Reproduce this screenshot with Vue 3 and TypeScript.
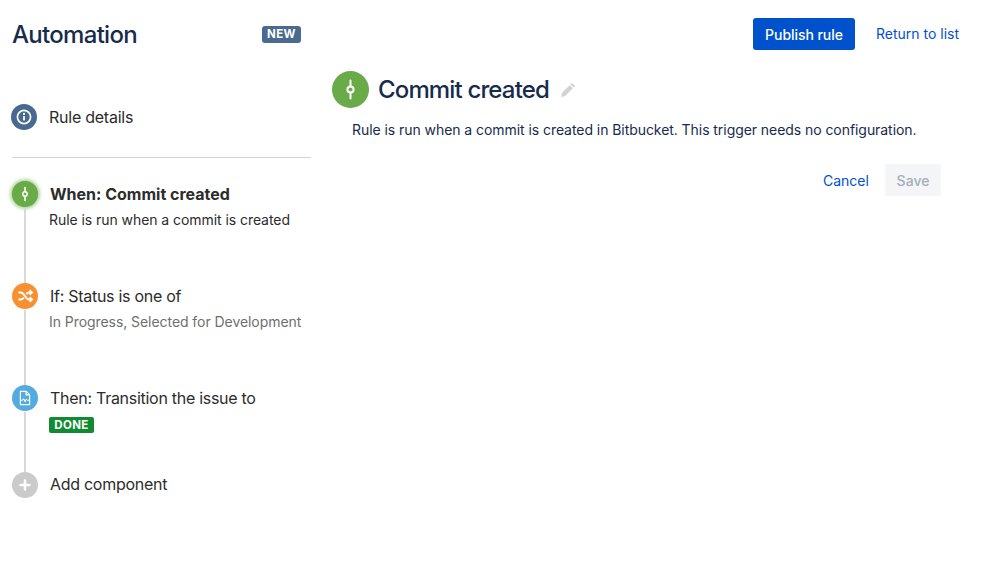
<script setup lang="ts">
interface Step {
  title: string
  sub?: string
  muted?: boolean
  active?: boolean
  lozenge?: string
  kind: 'commit' | 'shuffle' | 'file' | 'add'
}
const steps: Step[] = [
  { title: 'When: Commit created', sub: 'Rule is run when a commit is created', active: true, kind: 'commit' },
  { title: 'If: Status is one of', sub: 'In Progress, Selected for Development', muted: true, kind: 'shuffle' },
  { title: 'Then: Transition the issue to', lozenge: 'DONE', kind: 'file' },
  { title: 'Add component', kind: 'add' }
]
</script>

<template>
  <div class="page">
    <aside class="side">
      <div class="brand">
        <h1>Automation</h1>
        <span class="badge">NEW</span>
      </div>
      <div class="details">
        <span class="dot info">
          <svg width="26" height="26" viewBox="0 0 26 26" fill="none">
            <circle cx="13" cy="13" r="6.6" stroke="#fff" stroke-width="1.7" />
            <rect x="12.1" y="12" width="1.8" height="4.4" rx=".5" fill="#fff" />
            <circle cx="13" cy="9.9" r="1.05" fill="#fff" />
          </svg>
        </span>
        <span class="details-label">Rule details</span>
      </div>
      <hr class="rule" />
      <ol class="steps">
        <li v-for="s in steps" :key="s.kind" class="step" :class="s.kind">
          <div class="rail">
            <span class="dot" :class="['ic-' + s.kind, { glow: s.active }]">
              <svg v-if="s.kind === 'commit'" width="26" height="26" viewBox="0 0 26 26" fill="none">
                <path d="M13 6.5v4.2M13 15.3v4.2" stroke="#fff" stroke-width="1.6" stroke-linecap="round" />
                <circle cx="13" cy="13" r="2.2" stroke="#fff" stroke-width="1.5" />
              </svg>
              <svg v-else-if="s.kind === 'shuffle'" width="26" height="26" viewBox="0 0 26 26" fill="none" stroke="#fff" stroke-width="1.9">
                <path d="M6.5 9.5h2.6c3 0 4.6 7 7.8 7h1.6M6.5 16.5h2.6c1.2 0 2-.9 2.7-2M14.3 11.2c.7-1 1.5-1.7 2.6-1.7h1.6" />
                <path d="M17.6 7.2l2.4 2.3-2.4 2.3M17.6 14.2l2.4 2.3-2.4 2.3" />
              </svg>
              <svg v-else-if="s.kind === 'file'" width="26" height="26" viewBox="0 0 26 26" fill="none" stroke="#fff" stroke-width="1.2">
                <path d="M8.4 6.4h5.9l3.3 3.3v9.9H8.4z" stroke-linejoin="round" />
                <path d="M14.1 6.6v3.3h3.3" />
                <path d="M8.8 15.2h2l.9-1.6 1.3 3.2 1.2-2.6.7 1h2.3" stroke-width="1" />
              </svg>
              <svg v-else width="26" height="26" viewBox="0 0 26 26" fill="none">
                <path d="M13 8.6v8.8M8.6 13h8.8" stroke="#fff" stroke-width="2.6" stroke-linecap="round" />
              </svg>
            </span>
            <span v-if="s.kind !== 'add'" class="line"></span>
          </div>
          <div class="body">
            <div class="title" :class="{ strong: s.active }">{{ s.title }}</div>
            <div v-if="s.sub" class="sub" :class="{ muted: s.muted }">{{ s.sub }}</div>
            <span v-if="s.lozenge" class="lozenge">{{ s.lozenge }}</span>
          </div>
        </li>
      </ol>
    </aside>

    <main class="main">
      <div class="top">
        <button class="primary">Publish rule</button>
        <a class="link return">Return to list</a>
      </div>
      <div class="heading">
        <span class="dot big">
          <svg width="37" height="37" viewBox="0 0 37 37" fill="none">
            <path d="M18.5 9.5v6M18.5 21.5v6" stroke="#fff" stroke-width="2" stroke-linecap="round" />
            <circle cx="18.5" cy="18.5" r="3.1" stroke="#fff" stroke-width="2" />
          </svg>
        </span>
        <h2>Commit created</h2>
        <svg class="pencil" width="16" height="16" viewBox="0 0 16 16">
          <path d="M12 .9l3.1 3.1-1.5 1.5-3.1-3.1zM9.7 3.2l3.1 3.1-7.6 7.6-4.2 1.1 1.1-4.2z" fill="#d2d2d2" />
        </svg>
      </div>
      <p class="desc">Rule is run when a commit is created in Bitbucket. This trigger needs no configuration.</p>
      <div class="actions">
        <a class="link cancel">Cancel</a>
        <button class="save" disabled>Save</button>
      </div>
    </main>
  </div>
</template>

<style>
body {
  background: #fff;
}
</style>

<style scoped>
.page {
  width: 999px;
  height: 565px;
  display: flex;
  overflow: hidden;
  font-family: Inter, "Liberation Sans", sans-serif;
  color: #172b4d;
}
.side {
  width: 299px;
  margin-left: 12px;
  flex: none;
  display: flex;
  flex-direction: column;
}
.brand {
  display: flex;
  align-items: center;
  justify-content: space-between;
  height: 68px;
  padding-right: 10px;
}
h1 {
  margin: 0;
  font-size: 24px;
  font-weight: 500;
  letter-spacing: -0.7px;
  color: #172b4d;
}
.badge {
  width: 39px;
  height: 17px;
  border-radius: 3px;
  background: #4a6a8f;
  color: #fff;
  font-size: 11.5px;
  font-weight: 700;
  line-height: 17px;
  text-align: center;
  letter-spacing: 0.4px;
}
.details {
  display: flex;
  align-items: center;
  gap: 12px;
  height: 26px;
  margin-top: 36px;
  margin-left: -1px;
}
.details-label {
  font-size: 16px;
  letter-spacing: -0.25px;
  color: #2c2c2c;
}
.dot {
  display: block;
  flex: none;
  width: 26px;
  height: 26px;
  border-radius: 50%;
}
.dot svg {
  display: block;
}
.info {
  background: #49698e;
}
.rule {
  border: 0;
  height: 1px;
  background: #d4d4d4;
  margin: 27px 0 0;
  width: 299px;
}
.steps {
  list-style: none;
  margin: 23px 0 0;
  padding: 0;
}
.step {
  display: flex;
  height: 102px;
}
.step.file {
  height: 87px;
}
.step.add {
  height: 26px;
}
.rail {
  width: 26px;
  flex: none;
  display: flex;
  flex-direction: column;
  align-items: center;
}
.line {
  flex: 1;
  width: 2px;
  background: #d9d9d9;
  margin-top: 1px;
}
.ic-commit {
  background: #68ab48;
}
.glow {
  box-shadow: 0 0 4px 1px rgba(104, 171, 72, 0.75);
}
.ic-shuffle {
  background: #f7902f;
}
.ic-file {
  background: #54abdf;
}
.ic-add {
  background: #cbcbcb;
}
.body {
  margin-left: 12px;
}
.title {
  font-size: 16px;
  line-height: 26px;
  letter-spacing: -0.28px;
  color: #2c2c2c;
}
.title.strong {
  font-weight: 700;
  letter-spacing: 0;
}
.add .title {
  line-height: 24px;
}
.sub {
  font-size: 14px;
  line-height: 20px;
  margin-top: 3px;
  margin-left: -1px;
  letter-spacing: -0.06px;
  color: #2c2c2c;
}
.sub.muted {
  color: #6f6f6f;
}
.lozenge {
  display: block;
  width: 45px;
  height: 16px;
  margin-top: 6px;
  margin-left: -1px;
  border-radius: 2px;
  background: #118a31;
  color: #fff;
  font-size: 11.5px;
  font-weight: 700;
  line-height: 16px;
  text-align: center;
  letter-spacing: 0.4px;
}
.main {
  flex: 1;
  min-width: 0;
  padding-left: 21px;
  display: flex;
  flex-direction: column;
}
.top {
  display: flex;
  align-items: center;
  height: 32px;
  margin-top: 18px;
  margin-left: 421px;
}
.primary {
  width: 102px;
  height: 32px;
  border: 0;
  border-radius: 3px;
  background: #0052cc;
  color: #fff;
  font: 500 14px Inter, "Liberation Sans", sans-serif;
  letter-spacing: -0.05px;
  padding: 0;
}
.link {
  color: #0052cc;
  font-size: 14px;
  line-height: 20px;
}
.return {
  margin-left: 21px;
  margin-top: -1px;
}
.heading {
  display: flex;
  align-items: center;
  height: 37px;
  margin-top: 21px;
}
.big {
  width: 37px;
  height: 37px;
  background: #68ab48;
}
h2 {
  margin: -1px 0 0 9px;
  font-size: 24px;
  font-weight: 500;
  letter-spacing: -0.85px;
  color: #172b4d;
}
.pencil {
  margin-left: 11px;
}
.desc {
  margin: 12px 0 0 20px;
  font-size: 14px;
  line-height: 20px;
  letter-spacing: -0.06px;
  color: #172b4d;
}
.actions {
  display: flex;
  align-items: center;
  height: 32px;
  margin-top: 24px;
  margin-left: 491px;
}
.cancel {
  width: 62px;
  padding-top: 1px;
}
.save {
  width: 56px;
  height: 32px;
  border: 0;
  border-radius: 3px;
  background: #f4f5f7;
  color: #a5adba;
  font: 500 14px Inter, "Liberation Sans", sans-serif;
  padding: 0;
}
</style>
